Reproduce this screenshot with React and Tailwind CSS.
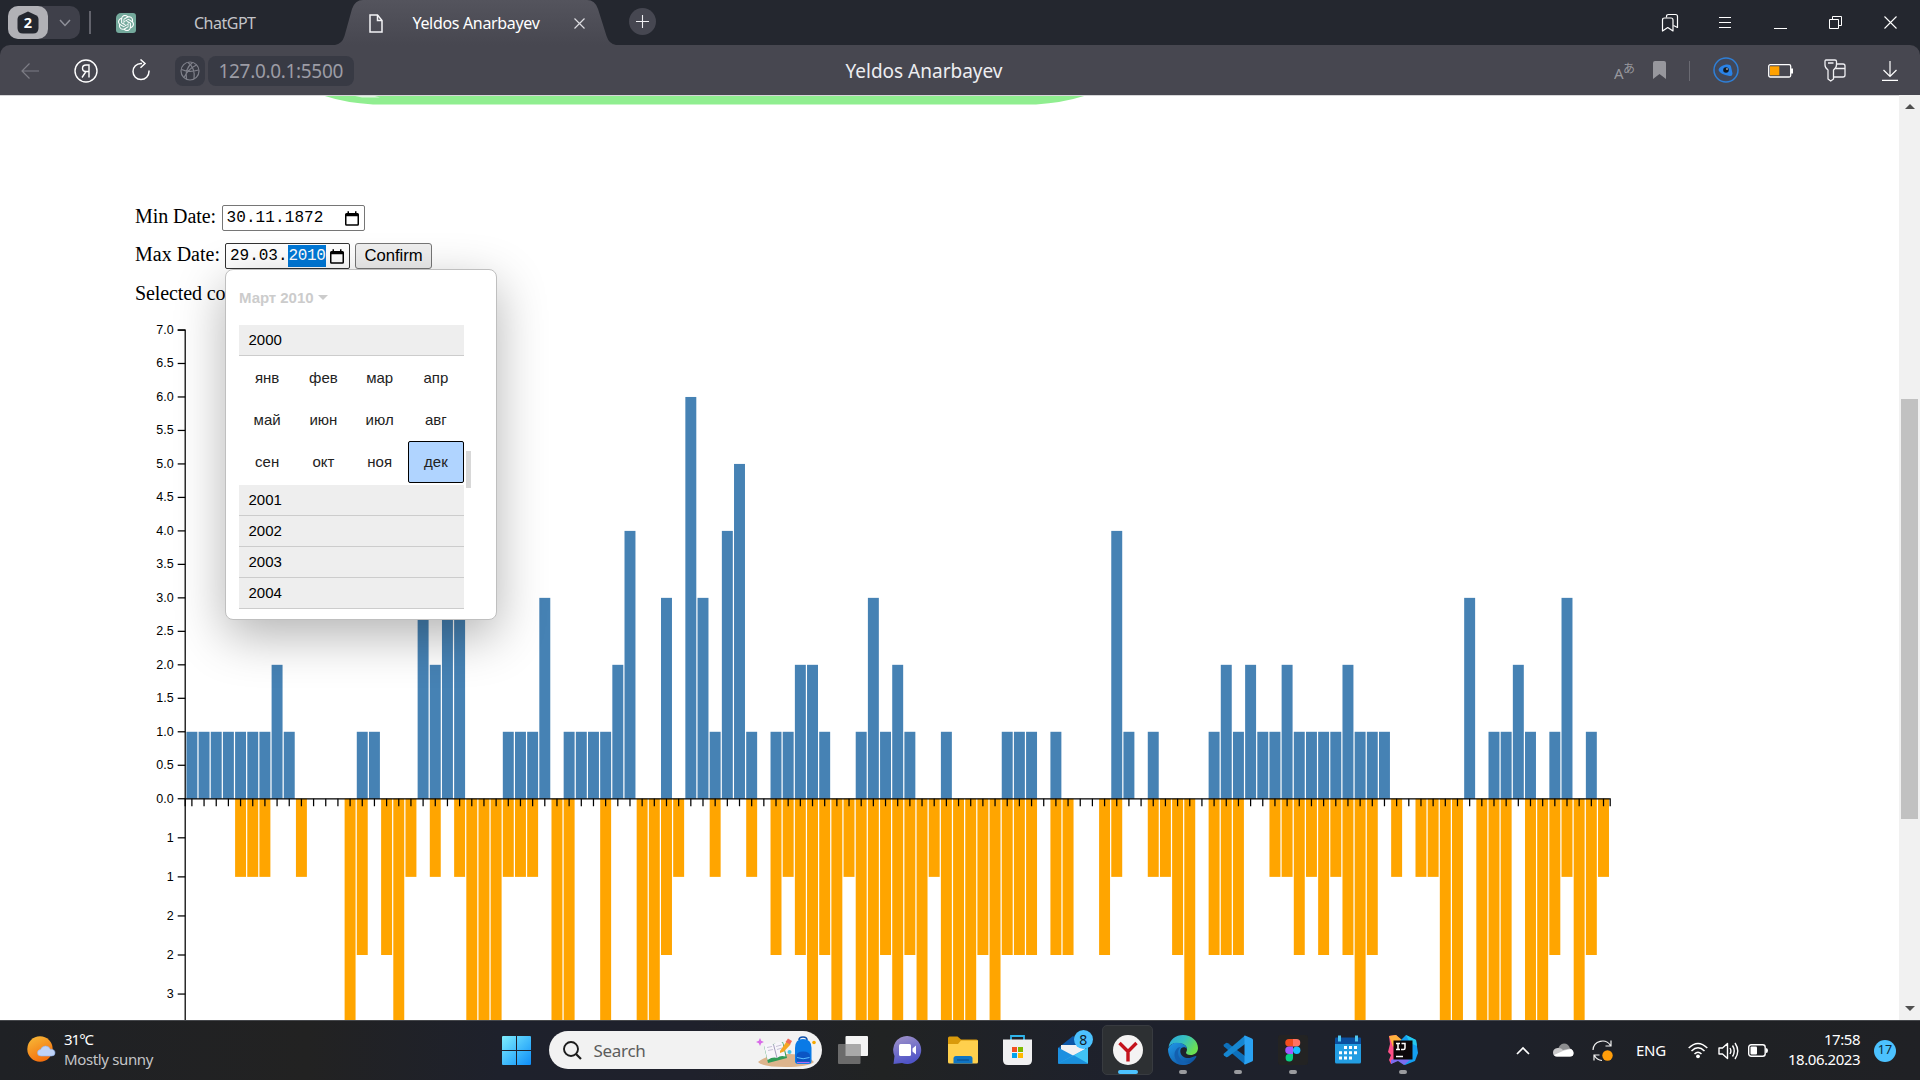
import { useLayoutEffect, useRef, useState } from "react";
import { SiOpenai } from "react-icons/si";

const UI = "font-['Noto_Sans',sans-serif]";
const ARIAL = "font-['Liberation_Sans',sans-serif]";

/* One line of text whose tracking is tuned so that it spans exactly w pixels. */
function Fit({ w, className = "", children }) {
  const ref = useRef(null);
  const [spacing, setSpacing] = useState(0);
  useLayoutEffect(() => {
    const natural = ref.current.getBoundingClientRect().width;
    setSpacing((w - natural) / String(children).length);
  }, [w, children]);
  return (
    <span ref={ref} className={"inline-block whitespace-pre " + className} style={{ letterSpacing: spacing }}>
      {children}
    </span>
  );
}

/* ---------- chart data: [index, value] ---------- */
const births = [
  [0, 1], [1, 1], [2, 1], [3, 1], [4, 1], [5, 1], [6, 1], [7, 2], [8, 1], [14, 1], [15, 1], [19, 3], [20, 2], [21, 3], [22, 3],
  [26, 1], [27, 1], [28, 1], [29, 3], [31, 1], [32, 1], [33, 1], [34, 1], [35, 2], [36, 4], [39, 3], [41, 6], [42, 3], [43, 1],
  [44, 4], [45, 5], [46, 1], [48, 1], [49, 1], [50, 2], [51, 2], [52, 1], [55, 1], [56, 3], [57, 1], [58, 2], [59, 1], [62, 1],
  [67, 1], [68, 1], [69, 1], [71, 1], [76, 4], [77, 1], [79, 1], [84, 1], [85, 2], [86, 1], [87, 2], [88, 1], [89, 1], [90, 2],
  [91, 1], [92, 1], [93, 1], [94, 1], [95, 2], [96, 1], [97, 1], [98, 1], [105, 3], [107, 1], [108, 1], [109, 2], [110, 1],
  [112, 1], [113, 3], [115, 1],
];
const deaths = [
  [4, 1], [5, 1], [6, 1], [9, 1], [13, 4], [14, 2], [16, 2], [17, 4], [18, 1], [20, 1], [22, 1], [23, 4], [24, 4], [25, 4],
  [26, 1], [27, 1], [28, 1], [30, 4], [31, 4], [34, 4], [37, 4], [38, 4], [39, 2], [40, 1], [43, 1], [46, 1], [48, 2], [49, 1],
  [50, 2], [51, 4], [52, 2], [53, 4], [54, 1], [55, 4], [56, 4], [57, 2], [58, 4], [59, 2], [60, 4], [61, 1], [62, 4], [63, 4],
  [64, 4], [65, 2], [66, 4], [67, 2], [68, 2], [69, 2], [71, 2], [72, 2], [75, 2], [76, 1], [79, 1], [80, 1], [81, 2], [82, 4],
  [84, 2], [85, 2], [86, 2], [89, 1], [90, 1], [91, 2], [92, 1], [93, 2], [94, 1], [95, 2], [96, 4], [97, 2], [99, 1], [101, 1],
  [102, 1], [103, 4], [104, 4], [106, 4], [107, 4], [108, 4], [110, 4], [111, 4], [112, 2], [113, 1], [114, 4], [115, 2], [116, 1],
];
const X0 = 185.2;
const Y0 = 798.75;
const STEP = 1425 / 117.1;
const UP = 468.75 / 7;
const DOWN = 78.125;
const barX = (i) => X0 + STEP * (i + 0.1);

function Chart() {
  const upTicks = Array.from({ length: 15 }, (_, k) => k / 2);
  const downTicks = [[0.5, "1"], [1, "1"], [1.5, "2"], [2, "2"], [2.5, "3"]];
  return (
    <svg width="1899" height="710" viewBox="0 310 1899 710" className="block shrink-0">
      <g fill="#4682b4">
        {births.map(([i, v]) => (
          <rect key={i} x={barX(i)} y={Y0 - v * UP} width={STEP * 0.9} height={v * UP} />
        ))}
      </g>
      <g fill="#ffa500">
        {deaths.map(([i, v]) => (
          <rect key={i} x={barX(i)} y={Y0} width={STEP * 0.9} height={v * DOWN} />
        ))}
      </g>
      <g stroke="#000" strokeWidth="1.25" fill="none">
        <path d={`M${X0 - 7.5},330H${X0}V1030`} />
        <path d={`M${X0},${Y0 + 7.5}V${Y0}H${X0 + 1425}V${Y0 + 7.5}`} />
        {Array.from({ length: 117 }, (_, i) => (
          <path key={i} d={`M${barX(i) + STEP * 0.45},${Y0}v7.5`} />
        ))}
        {upTicks.map((t) => (
          <path key={t} d={`M${X0 - 7.5},${Y0 - t * UP}h7.5`} />
        ))}
        {downTicks.map(([t]) => (
          <path key={t} d={`M${X0 - 7.5},${Y0 + t * DOWN}h7.5`} />
        ))}
      </g>
      <g className={ARIAL} fontSize="12.5" textAnchor="end" fill="#000">
        {upTicks.map((t) => (
          <text key={t} x={X0 - 11.5} y={Y0 - t * UP + 4}>{t.toFixed(1)}</text>
        ))}
        {downTicks.map(([t, l]) => (
          <text key={t} x={X0 - 11.5} y={Y0 + t * DOWN + 4}>{l}</text>
        ))}
      </g>
    </svg>
  );
}

/* ---------- browser chrome ---------- */
function Svg({ w, h, className = "", children, ...rest }) {
  return (
    <svg width={w} height={h} viewBox={`0 0 ${w} ${h}`} fill="none" className={"block shrink-0 " + className} {...rest}>
      {children}
    </svg>
  );
}

function TabStrip() {
  return (
    <div className={"flex h-[45px] items-start bg-[#24272f] " + UI}>
      <div className="mt-1.5 ml-2 flex h-[33px] w-[72px] rounded-[10px] bg-[#3f404a]">
        <div className="flex w-10 items-center justify-center rounded-[10px] bg-[#b1b1b6]">
          <Svg w={22} h={23}>
            <path d="M11 0.5L19 4.2Q21.5 5.4 21.5 8V17Q21.5 22.5 16 22.5H6Q0.5 22.5 0.5 17V8Q0.5 5.4 3 4.2Z" fill="#24272f" />
            <text x="11" y="17" textAnchor="middle" fontSize="14.5" fontWeight="700" fill="#fff">2</text>
          </Svg>
        </div>
        <Svg w={12} h={8} className="mt-[13px] ml-[10.500px]" stroke="#8f9099" strokeWidth="1.5">
          <path d="M1 1L6 6.5L11 1" />
        </Svg>
      </div>
      <div className="mt-[11px] ml-[9px] h-[23px] w-[2px] bg-[#62636c]" />
      <div className="mt-[13px] ml-[25px] flex h-5 w-5 items-center justify-center rounded-[3px] rounded-tl-[5px] bg-[#74a99c]">
        <SiOpenai className="h-4 w-4 text-white" />
      </div>
      <div className="mt-[11px] ml-[58px] w-[62px] text-[16px] leading-6 text-[#c3c4c9]">
        <Fit w={61.5}>ChatGPT</Fit>
      </div>
      <div className="relative ml-[79px] h-[45px] w-[281px]">
        <Svg w={281} h={45} className="absolute inset-0">
          <defs>
            <linearGradient id="tab" x1="0" y1="0" x2="0" y2="1">
              <stop offset="0" stopColor="#54545d" />
              <stop offset="1" stopColor="#474750" />
            </linearGradient>
          </defs>
          <path d="M0 45Q7 44 9.500 36L17 9Q20 0 28 0H252Q260 0 263 9L271.500 36Q274 44 281 45Z" fill="url(#tab)" />
        </Svg>
        <div className="relative flex items-start">
          <Svg w={14} h={19} className="mt-[13.500px] ml-[34px]" stroke="#f4f4f6" strokeWidth="1.500">
            <path d="M1 1H8.500L13 6.500V18H1Z" />
            <path d="M8.500 1V6.500H13" />
          </Svg>
          <div className="mt-[11px] ml-[29.500px] w-[127px] text-[16px] leading-6 text-white">
            <Fit w={127}>Yeldos Anarbayev</Fit>
          </div>
          <Svg w={11} h={11} className="mt-[17.500px] ml-[34px]" stroke="#dcdce0" strokeWidth="1.200">
            <path d="M0.500 0.500L10.500 10.500M10.500 0.500L0.500 10.500" />
          </Svg>
        </div>
      </div>
      <Svg w={27} h={27} className="mt-2 ml-[13px]">
        <circle cx="13.500" cy="13.500" r="13.500" fill="#464751" />
        <path d="M13.500 7V20M7 13.500H20" stroke="#f0f0f3" strokeWidth="1.100" />
      </Svg>
      <Svg w={18} h={19} className="mt-[13px] ml-[1005px]" stroke="#fff" strokeWidth="1.200">
        <path d="M1.500 18V7Q1.500 5 3.500 5H10Q12 5 12 7V18L6.750 14.500Z" strokeLinejoin="round" />
        <path d="M5.500 4.500V3.500Q5.500 1.500 7.500 1.500H14.500Q16.500 1.500 16.500 3.500V14.500L12.500 12.500" strokeLinejoin="round" />
      </Svg>
      <Svg w={12} h={12} className="mt-[17px] ml-[40px]" stroke="#fff" strokeWidth="1">
        <path d="M0 0.500H12M0 5.500H12M0 10.500H12" />
      </Svg>
      <div className="mt-7 ml-[43px] h-px w-[13px] bg-white" />
      <Svg w={13} h={13} className="mt-4 ml-[42px]" stroke="#fff" strokeWidth="1">
        <path d="M0.500 3.500H9.500V12.500H0.500Z" />
        <path d="M3.500 3.500V0.500H12.500V9.500H9.500" />
      </Svg>
      <Svg w={13} h={13} className="mt-4 ml-[42px]" stroke="#fff" strokeWidth="1.100">
        <path d="M0.500 0.500L12.500 12.500M12.500 0.500L0.500 12.500" />
      </Svg>
    </div>
  );
}

function Toolbar() {
  return (
    <div className={"bg-[#24272f] " + UI}>
      <div className="flex h-[50px] items-center rounded-t-[10px] bg-[#474750] pt-px">
        <Svg w={18} h={16} className="ml-[20.500px]" stroke="#7d7d85" strokeWidth="1.200">
          <path d="M8.500 0.500L1 8L8.500 15.500M1 8H18" />
        </Svg>
        <Svg w={24} h={24} className="ml-[35px]" stroke="#fff" strokeWidth="1.400">
          <circle cx="12" cy="12" r="11" />
          <path d="M15 18.500V6H12Q8.500 6 8.500 9.300Q8.500 12.500 12 12.500H15M12 12.500L8 18.500" />
        </Svg>
        <Svg w={18} h={22} className="-mt-px ml-[34px]" stroke="#fff" strokeWidth="1.500">
          <path d="M10 4.500H9A8 8 0 1 0 17 12.500V11.500" />
          <path d="M8.500 0.500L13 4.500L8.500 8.700" />
        </Svg>
        <div className="ml-[25.500px] flex h-[30px] w-[30px] items-center justify-center rounded-lg bg-[#383a44]">
          <Svg w={20} h={20} stroke="#7f808a" strokeWidth="1.200">
            <circle cx="10" cy="10" r="9" />
            <path d="M12.500 1.500Q4.500 8 6.500 18M8 1.500Q15.500 7 14 18M1.500 8.500Q9 12 18.500 9M4 16.500Q8 8 16.500 4" />
          </Svg>
        </div>
        <div className="ml-[3px] flex h-[30px] w-[146px] items-center rounded-lg bg-[#383a44] pl-[10.500px] text-[19px] text-[#9c9ca5]">
          <Fit w={124.5} className="mt-px">127.0.0.1:5500</Fit>
        </div>
        <div className="ml-[491.500px] w-[157px] text-[19px] text-[#ededf0]">
          <Fit w={157} className="mt-px">Yeldos Anarbayev</Fit>
        </div>
        <Svg w={22} h={30} className="ml-[611px]">
          <text x="0" y="23" fontSize="15" fill="#97979d">A</text>
          <text x="9" y="17" fontSize="12" fill="#97979d" className="font-['Noto_Sans_CJK_JP',sans-serif]">あ</text>
        </Svg>
        <Svg w={13} h={18} className="-mt-px ml-[17px]">
          <path d="M0 2Q0 0 2 0H11Q13 0 13 2V18L6.500 13L0 18Z" fill="#97979d" />
        </Svg>
        <div className="ml-[23.500px] h-5 w-px bg-[#6a6a72]" />
        <Svg w={26} h={26} className="-mt-px ml-[22.500px]">
          <circle cx="13" cy="13" r="12" stroke="#2f7fd6" strokeWidth="1.500" fill="#41485a" />
          <path d="M5.500 13Q6 9 13 7.500Q17.500 7 18 9.500L19.500 16.500Q19.500 19.500 16.500 19Q7 17.500 5.500 13Z" fill="#2a83e8" />
          <circle cx="13" cy="13" r="2.800" fill="#101820" />
          <circle cx="14" cy="12" r="0.800" fill="#fff" />
        </Svg>
        <Svg w={25} h={14} className="ml-[29.500px]">
          <rect x="0.700" y="0.700" width="22" height="12.300" rx="1.500" stroke="#fff" strokeWidth="1.300" />
          <rect x="2" y="2.300" width="9.300" height="9" fill="#ffa100" />
          <rect x="23" y="4.500" width="2" height="5" fill="#fff" />
        </Svg>
        <Svg w={22} h={23} className="-mt-px ml-[31px]" stroke="#f0f0f3" strokeWidth="1.300">
          <path d="M2 1H11Q12.500 1 12.500 2.500V6Q12.500 9 9.500 11V20L6.700 22L4 20V11Q1 9 1 6V2.500Q1 1 2 1ZM4 4H9.500" strokeLinejoin="round" />
          <path d="M12.500 5H19Q21 5 21 7V16Q21 18 19 18H9.500M11.500 9.500H21" />
        </Svg>
        <Svg w={16} h={20} className="ml-[36px]" stroke="#fff" strokeWidth="1.200">
          <path d="M8 0V15M1.500 9L8 15.500L14.500 9M0 19.300H16" />
        </Svg>
      </div>
    </div>
  );
}

/* ---------- page ---------- */
function CalendarGlyph({ className }) {
  return (
    <Svg w={14} h={15} className={className}>
      <path d="M0 3.500Q0 2 1.500 2H2.500V0.300H4V2H10V0.300H11.500V2H12.500Q14 2 14 3.500V13.200Q14 14.700 12.500 14.700H1.500Q0 14.700 0 13.200ZM1.500 5.300V13.200H12.500V5.300Z" fill="#000" fillRule="evenodd" />
    </Svg>
  );
}

const monthRows = [
  ["янв", "фев", "мар", "апр"],
  ["май", "июн", "июл", "авг"],
  ["сен", "окт", "ноя", "дек"],
];

function YearRow({ year }) {
  return <div className="h-[31px] border-b border-[#ccc] bg-[#eee] pl-[9.500px] leading-[30px]">{year}</div>;
}

function DatePopup() {
  return (
    <div className={"absolute top-[26px] left-0 h-[351px] w-[272px] rounded-lg border border-[#bfbfbf] bg-white text-[15px] text-black shadow-[0_16px_50px_rgba(0,0,0,0.3)] " + ARIAL}>
      <div className="flex h-[55px] items-center pl-[13px] font-bold text-[#ccc]">
        <Fit w={74.5}>Март 2010</Fit>
        <Svg w={10} h={5} className="ml-1">
          <path d="M0 0H10L5 5Z" fill="#ccc" />
        </Svg>
      </div>
      <div className="flex">
        <div className="ml-[13px] w-[225px]">
          <YearRow year="2000" />
          <div className="grid h-[129.400px] grid-cols-4 grid-rows-[42px_42px_42px] pt-px text-[#222]">
            {monthRows.flat().map((m) =>
              m === "дек" ? (
                <div key={m} className="flex items-center justify-center rounded-[2px] border border-black bg-[#b0d4ff]">{m}</div>
              ) : (
                <div key={m} className="flex items-center justify-center">{m}</div>
              )
            )}
          </div>
          <YearRow year="2001" />
          <YearRow year="2002" />
          <YearRow year="2003" />
          <YearRow year="2004" />
        </div>
        <div className="mt-[126px] ml-[2px] h-[37px] w-[5px] bg-[#d8d8d8]" />
      </div>
    </div>
  );
}

function Page() {
  return (
    <div className="flex h-[925px] overflow-hidden bg-white">
      <div className="flex w-[1899px] flex-col font-['Liberation_Serif',serif] text-[20px] leading-6 text-black">
        <Svg w={1899} h={10}>
          <path d="M324 0.800Q346 8 373 9.500H1036Q1062 8 1085 0.800Z" fill="#90ee90" />
          <path d="M355 1H375L380 2.500H362Z" fill="#dff5df" />
          <path d="M0 0.500H1899" stroke="#d6d6d8" />
        </Svg>
        <div className="mt-[100px] ml-[135px] flex h-[26px]">
          <div className="-mt-px w-[87px]"><Fit w={81}>Min Date:</Fit></div>
          <div className="flex h-[26px] w-[143px] items-center rounded-[2px] border border-[#767676] font-['Liberation_Mono',monospace] text-[16px]">
            <Fit w={97} className="ml-[3.500px]">30.11.1872</Fit>
            <CalendarGlyph className="ml-[21px]" />
          </div>
        </div>
        <div className="mt-3 ml-[135px] flex h-[26px]">
          <div className="-mt-px w-[90px]"><Fit w={85}>Max Date:</Fit></div>
          <div className="relative h-[26px] w-[125px]">
            <div className="flex h-[26px] items-center rounded-[2px] border border-[#333] font-['Liberation_Mono',monospace] text-[16px]">
              <Fit w={57.5} className="ml-[4px]">29.03.</Fit>
              <span className="flex h-[22px] w-[38px] items-center bg-[#0078d7] pl-px text-white"><Fit w={37}>2010</Fit></span>
              <CalendarGlyph className="ml-[4px]" />
            </div>
            <DatePopup />
          </div>
          <div className={"ml-[5px] flex h-[26px] w-[77px] items-center justify-center rounded-[3px] border border-[#767676] bg-[#efefef] text-[16.670px] leading-5 " + ARIAL}>
            <Fit w={58} className="-mt-px">Confirm</Fit>
          </div>
        </div>
        <div className="mt-3 ml-[135px] h-[29px]"><Fit w={90.5}>Selected co</Fit></div>
        <Chart />
      </div>
      <div className="flex w-[21px] flex-col items-center bg-[#f1f1f1]">
        <Svg w={10} h={5} className="mt-[9px]"><path d="M0 5L5 0L10 5Z" fill="#505050" /></Svg>
        <div className="mt-[290px] h-[420px] w-[17px] bg-[#c1c1c1]" />
        <Svg w={10} h={5} className="mt-[187px]"><path d="M0 0L5 5L10 0Z" fill="#505050" /></Svg>
      </div>
    </div>
  );
}

/* ---------- taskbar ---------- */
function Slot({ running, children }) {
  return (
    <div className="flex h-[59px] w-[55px] flex-col items-center pt-[14px]">
      <div className="flex h-[30px] items-center">{children}</div>
      {running && <div className="mt-[5px] h-1 w-2 rounded-full bg-[#9a9b9f]" />}
    </div>
  );
}

function SearchArt() {
  return (
    <Svg w={60} h={31}>
      <path d="M2 26Q12 18 30 18Q50 17 58 26Q52 31 30 31Q6 31 2 26Z" fill="#dcb48c" />
      <path d="M8 10L27 6L31 22L12 27Z" fill="#2e9b57" />
      <path d="M8 9.500Q13 6 17.500 8.500Q21.500 4.500 26.500 6.500L29.500 20.500Q24.500 19 21 22Q17 20.500 11.500 24Z" fill="#f7f5fa" />
      <path d="M17.500 8.500L21 22" stroke="#9a93b5" strokeWidth="0.900" />
      <path d="M11 11.500L16 10.500M12 14.500L17 13.500M20 10.500L25.500 9M21 13.500L26 12" stroke="#b9b4cb" strokeWidth="0.800" />
      <path d="M24 15L30.500 5.500L34.500 8.500L28 15.500L24 17Z" fill="#f5a623" />
      <path d="M29.500 6L32 2.500L36 5L34 8.500Z" fill="#ef6a5a" />
      <path d="M4 2L5.200 4.800L8 6L5.200 7.200L4 10L2.800 7.200L0 6L2.800 4.800Z" fill="#d86be8" />
      <circle cx="33.500" cy="16" r="2" fill="#4ac7e6" />
      <circle cx="58" cy="6.500" r="1.800" fill="#f5a800" />
      <path d="M43 4Q43 1 47 1Q51 1 51 4" stroke="#0f4fa8" strokeWidth="1.600" />
      <path d="M39 12Q39 3 47 3Q55.500 3 55.500 12V25Q55.500 28 52.500 28H42Q39 28 39 25Z" fill="#0a7ae6" />
      <path d="M40.500 20Q40.500 15.500 47 15.500Q54 15.500 54 20V25Q54 27 52 27H42.500Q40.500 27 40.500 25Z" fill="#0b55c4" />
      <path d="M41 21.500Q47 24 53.500 21.500" stroke="#5cc0ff" />
      <path d="M41 26.500H53.500" stroke="#b06cf0" strokeWidth="1.200" />
    </Svg>
  );
}

function Taskbar() {
  return (
    <div className={"flex h-[60px] border-t border-[#45474b] bg-[linear-gradient(90deg,#1f2125_0%,#222222_16%,#1e212c_26%,#1f212c_36%,#212323_46%,#1e212c_58%,#1e212a_78%,#1f2124_90%,#202125_100%)] text-[15px] text-white " + UI}>
      <Svg w={30} h={28} className="mt-[14px] ml-[26px]">
        <defs>
          <linearGradient id="sun" x1="0" y1="0" x2="0.500" y2="1">
            <stop offset="0" stopColor="#f7bd3a" />
            <stop offset="1" stopColor="#f4700e" />
          </linearGradient>
        </defs>
        <circle cx="14" cy="14" r="12.700" fill="url(#sun)" />
        <path d="M15 21Q11.500 21 11.500 17.800Q11.500 15 14.500 14.600Q16 11 19.500 11Q23 11 24.200 14.200Q29 14 29 18Q29 21 25.500 21Z" fill="#bfd3f8" stroke="#8fb2ee" strokeWidth="0.600" />
      </Svg>
      <div className="mt-2 ml-2 w-[121px] leading-5">
        <div><Fit w={29}>31°C</Fit></div>
        <div className="text-[#c4c5c8]"><Fit w={89}>Mostly sunny</Fit></div>
      </div>
      <Svg w={29} h={29} className="mt-[15px] ml-[317px]">
        <defs>
          <linearGradient id="win" x1="0" y1="0" x2="29" y2="29" gradientUnits="userSpaceOnUse">
            <stop offset="0" stopColor="#7fedfd" />
            <stop offset="0.600" stopColor="#38b4fb" />
            <stop offset="1" stopColor="#0f8df7" />
          </linearGradient>
        </defs>
        <path d="M1 0H14V14H0V1Q0 0 1 0ZM15 0H28Q29 0 29 1V14H15ZM0 15H14V29H1Q0 29 0 28ZM15 15H29V28Q29 29 28 29H15Z" fill="url(#win)" />
      </Svg>
      <div className="mt-[10px] ml-[18px] flex h-[38px] w-[273px] items-center rounded-full bg-[#f2f2f2] text-[17px] text-[#5c5c5c]">
        <Svg w={19} h={19} className="ml-[14px]" stroke="#1c1c1c" strokeWidth="1.900">
          <circle cx="8" cy="8" r="7" />
          <path d="M13 13L18 18" strokeWidth="2.200" />
        </Svg>
        <Fit w={52} className="mt-[2px] ml-[11.500px]">Search</Fit>
        <div className="mt-[2px] ml-[110.500px]"><SearchArt /></div>
      </div>
      <div className="ml-[3px] flex">
        <Slot>
          <Svg w={30} h={28}>
            <rect x="7.500" width="22.500" height="20" rx="1" fill="#f4f4f4" />
            <rect y="8" width="22.500" height="20" rx="1" fill="#6b6b6b" />
            <path d="M7.500 8H22.500V20H7.500Z" fill="#a9a9a9" />
          </Svg>
        </Slot>
        <Slot>
          <Svg w={29} h={28}>
            <defs>
              <linearGradient id="chat" x1="0" y1="0" x2="0.300" y2="1">
                <stop offset="0" stopColor="#a294c8" />
                <stop offset="1" stopColor="#5055c8" />
              </linearGradient>
            </defs>
            <path d="M14.500 0A14 14 0 1 1 9 27L0.500 28L1.500 20A14 14 0 0 1 14.500 0Z" fill="url(#chat)" />
            <rect x="6" y="8" width="12" height="12" rx="1.500" fill="#fff" />
            <path d="M19.500 12.500L23 9.500V18.500L19.500 15.500Z" fill="#fff" />
          </Svg>
        </Slot>
        <Slot>
          <Svg w={30} h={28}>
            <path d="M0 2Q0 0.500 1.500 0.500H9.500L13 3.500H28.500Q30 3.500 30 5V12H0Z" fill="#d99a0b" />
            <path d="M0 8H10L13 4.500H30V26Q30 27.500 28.500 27.500H1.500Q0 27.500 0 26Z" fill="#ffd04d" />
            <path d="M5.500 27.500V22.500Q5.500 20 8 20H22Q24.500 20 24.500 22.500V27.500Z" fill="#0f75c4" />
            <path d="M9 24H21" stroke="#0a4f91" strokeWidth="1.200" />
          </Svg>
        </Slot>
        <Slot>
          <Svg w={29} h={30}>
            <path d="M8 5V1H21V5" stroke="#2fb4ea" strokeWidth="1.800" />
            <path d="M0 4.500H29V25Q29 30 24 30H5Q0 30 0 25Z" fill="#f0f0f1" />
            <path d="M9 12H14V17H9Z" fill="#f25022" />
            <path d="M15 12H20V17H15Z" fill="#7fba00" />
            <path d="M9 18H14V23H9Z" fill="#00a4ef" />
            <path d="M15 18H20V23H15Z" fill="#ffb900" />
          </Svg>
        </Slot>
        <Slot>
          <div className="relative">
            <Svg w={30} h={28}>
              <path d="M0 12L15 0L30 12V20H0Z" fill="#0c57a8" />
              <path d="M3 9H27V18L15 22L3 14Z" fill="#f1f1f3" />
              <path d="M0 11.500L30 27.500H0Z" fill="#1c8fe0" />
              <path d="M30 11.500L0 27.500H30Z" fill="#2fa8ee" />
              <path d="M30 11.500L16 19.500L30 27.500Z" fill="#40c4f4" />
              <path d="M16 19.500L30 27.500H0Z" fill="#1a90dd" />
            </Svg>
            <div className="absolute -top-[6.500px] left-[16px] flex h-[19.500px] w-[19.500px] items-center justify-center rounded-full bg-[#4cc2ff] text-[14px] text-[#10202a]">8</div>
          </div>
        </Slot>
        <div className="mt-1 ml-[2px] mr-[2px] flex h-[50px] w-[51px] flex-col items-center rounded-[5px] border border-[#383b40] bg-[#2d3033] pt-[9px]">
          <Svg w={30} h={30}>
            <circle cx="15" cy="15" r="15" fill="#f4f3f3" />
            <path d="M6.500 8L15 16.500V26.500M23.500 8L15 16.500" stroke="#c4131c" strokeWidth="3.400" />
          </Svg>
          <div className="mt-[5px] h-1 w-5 rounded-full bg-[#4cc2ff]" />
        </div>
        <Slot running>
          <Svg w={30} h={30}>
            <defs>
              <linearGradient id="edgeTop" x1="0" y1="0" x2="1" y2="0.500">
                <stop offset="0" stopColor="#2aa6dc" />
                <stop offset="0.500" stopColor="#36bfc0" />
                <stop offset="1" stopColor="#6be052" />
              </linearGradient>
              <linearGradient id="edgeBot" x1="0" y1="0" x2="1" y2="1">
                <stop offset="0" stopColor="#2098e8" />
                <stop offset="1" stopColor="#0c4a96" />
              </linearGradient>
            </defs>
            <path d="M0.500 12C2 4 8 0 15 0C23.500 0 30 6 30 13C30 17.500 26.500 20 22.500 20C19.500 20 18 18.700 18 17.800C18 17 19 16.500 19 14C19 10 14 8 9 8C5 8 2 10 0.500 12Z" fill="url(#edgeTop)" />
            <path d="M0 14C2 9 6 7.500 9.500 7.700C15 8 19 10.500 19 14C18 12 15 11.500 13.500 13C11.500 15 12 19 15 21.500C18.500 24 23 23 26 21.500C28 20.500 29 21 28 22.500C25 27.500 20.500 30 15 30C6 30 0 23 0 14Z" fill="url(#edgeBot)" />
            <path d="M13 12C10 14 9.500 18 11 21.500C13 26 17.500 28.500 22 28C19.500 29.500 17 30 15 30C10 28.500 6.500 24.500 6.500 20C6.500 15.500 9.500 12 13 12Z" fill="#1360b0" />
          </Svg>
        </Slot>
        <Slot running>
          <Svg w={30} h={30}>
            <path d="M1 9.500L3 8Q4 7.500 5 8.200L22 21V29.500L1 11.500Q0 10.500 1 9.500Z" fill="#0d70bb" />
            <path d="M1 20.500L3 22Q4 22.500 5 21.800L22 9V0.500L1 18.500Q0 19.500 1 20.500Z" fill="#1686d0" />
            <path d="M22 0.500L29 3.500Q30 4 30 5V25Q30 26 29 26.500L22 29.500Q20.500 29.500 21.500 27V3Q20.500 0.500 22 0.500Z" fill="#2aa2f2" />
          </Svg>
        </Slot>
        <Slot running>
          <Svg w={30} h={30}>
            <rect width="30" height="30" rx="3" fill="#232323" />
            <path d="M15 4H11A3.700 3.700 0 0 0 11 11.500H15Z" fill="#f24e1e" />
            <path d="M15 4H18.500A3.700 3.700 0 0 1 18.500 11.500H15Z" fill="#ff7262" />
            <path d="M15 11.500H11A3.700 3.700 0 0 0 11 19H15Z" fill="#a259ff" />
            <circle cx="18.700" cy="15.200" r="3.700" fill="#1abcfe" />
            <path d="M15 19H11A3.700 3.700 0 1 0 15 22.700Z" fill="#0acf83" />
          </Svg>
        </Slot>
        <Slot>
          <Svg w={26} h={29} className="-mt-[2px]">
            <path d="M0 3.500Q0 2.500 1 2.500H25Q26 2.500 26 3.500V10H0Z" fill="#0a4f9e" />
            <path d="M0 9H26V27Q26 28.500 24.500 28.500H1.500Q0 28.500 0 27Z" fill="#239de2" />
            <path d="M4.500 0.500V6.500M21.500 0.500V6.500" stroke="#4fc8f2" strokeWidth="3" />
            <path d="M9 12.500H23M4 17.700H23M4 23H18" stroke="#fff" strokeWidth="3" strokeDasharray="3 2" />
          </Svg>
        </Slot>
        <Slot running>
          <Svg w={30} h={30}>
            <path d="M1 1L8 0L12 4L8 14L12 24L3 29L1 25L3 20L0 17L2 9Z" fill="#ff4f87" />
            <path d="M1 1L8 0L14 5L5 12Z" fill="#ffb13d" />
            <path d="M12 6L18 0L28 5L30 18L27 26L17 30L10 25Z" fill="#149ff0" />
            <path d="M18 0L28 5L29 11L22 8Z" fill="#25c9ee" />
            <path d="M3 25L12 22L22 25L16 30L10 26L3 29Z" fill="#7b6cf0" />
            <rect x="5.500" y="5.500" width="19" height="19" fill="#0c0709" />
            <path d="M8 8.500H12M10 8.500V14.500M8 14.500H12M13.500 8.500H17V13Q17 14.500 15.500 14.500H13M8 21.500H15" stroke="#fff" strokeWidth="1.500" />
          </Svg>
        </Slot>
      </div>
      <div className="ml-[86px] flex h-[59px] items-center">
        <Svg w={14} h={9} stroke="#fff" strokeWidth="1.700" className="-mt-px">
          <path d="M1 8L7 2L13 8" />
        </Svg>
        <Svg w={21} h={14} className="-mt-px ml-[22.500px]">
          <path d="M5 7Q6 1 11 0.500Q15.500 0.500 17 5.500L12 10Z" fill="#8d8e90" />
          <path d="M0 9.500Q0 5.500 4.500 5Q8 4.500 10 7L17 5.500Q20.500 7 20.500 10Q20.500 13.500 17 13.500H4Q0 13.500 0 9.500Z" fill="#c9c9ca" />
          <path d="M1 12L11 7.500L18 6Q20.500 7.500 20.500 10Q20.500 13.500 17 13.500H4Q2 13.500 1 12Z" fill="#fff" />
        </Svg>
        <Svg w={22} h={22} className="ml-[18.500px]" stroke="#f2f2f2" strokeWidth="1.200">
          <path d="M1 10A9.500 9.500 0 0 1 18.500 5.500M19 0.500V6H13.500M2 20.500V15H7.500M2.500 15.500A9 9 0 0 0 10 20.500" />
          <circle cx="15.500" cy="15.500" r="5.200" fill="#ff9d0a" stroke="none" />
        </Svg>
        <div className="ml-[22px] w-[30px]"><Fit w={30}>ENG</Fit></div>
        <Svg w={20} h={17} className="ml-[22px]" stroke="#fff" strokeWidth="1.500">
          <path d="M0.700 6Q10 -3 19.300 6M3.500 9Q10 2.500 16.500 9M6.500 12Q10 8.500 13.500 12" />
          <circle cx="10" cy="14.300" r="1.900" fill="#fff" stroke="none" />
        </Svg>
        <Svg w={21} h={18} className="ml-[10px]" stroke="#fff" strokeWidth="1.400">
          <path d="M1 6H4.500L9.500 1.500V16.500L4.500 12H1Z" strokeLinejoin="round" />
          <path d="M12 6Q13.800 9 12 12M14.500 3.500Q18 9 14.500 14.500M17 1Q22.500 9 17 17" />
        </Svg>
        <Svg w={20} h={13} className="ml-[9px]">
          <rect x="0.700" y="0.700" width="16.500" height="11.600" rx="2.500" stroke="#fff" strokeWidth="1.400" />
          <rect x="2.500" y="2.500" width="6.500" height="8" rx="1" fill="#fff" />
          <path d="M18 4Q20 4 20 6.500Q20 9 18 9Z" fill="#fff" />
        </Svg>
        <div className="-mt-[3px] ml-[19px] flex w-[73px] flex-col items-end leading-5">
          <Fit w={36}>17:58</Fit>
          <Fit w={72}>18.06.2023</Fit>
        </div>
        <div className="ml-[14px] flex h-[22px] w-[22px] items-center justify-center rounded-full bg-[#4cc2ff] text-[12.500px] text-[#0d2a3a]">17</div>
      </div>
    </div>
  );
}

export default function App() {
  return (
    <div className="flex h-[1080px] w-[1920px] flex-col overflow-hidden">
      <TabStrip />
      <Toolbar />
      <Page />
      <Taskbar />
    </div>
  );
}
